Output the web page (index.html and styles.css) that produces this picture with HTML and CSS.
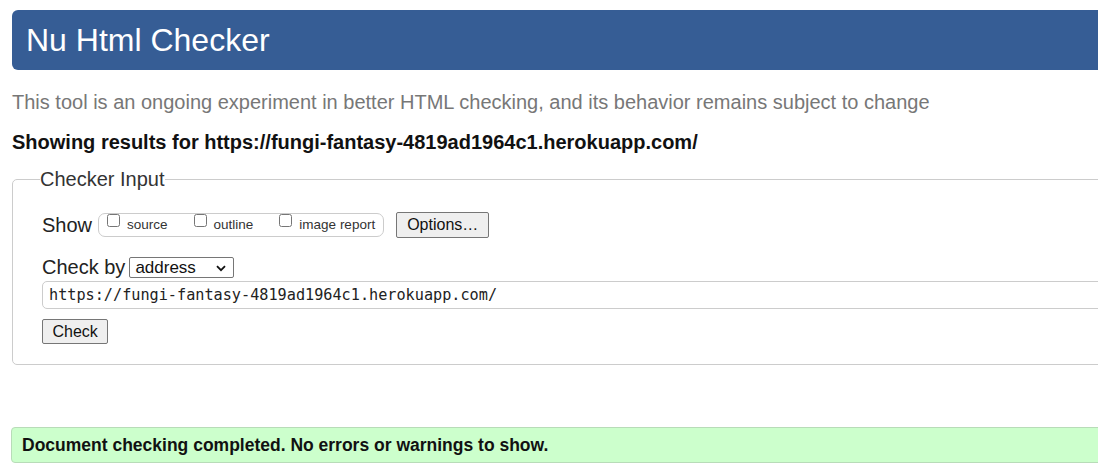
FILE: index.html
```html
<!DOCTYPE html>
<html lang="en">
<head>
<meta charset="utf-8">
<title>Nu Html Checker</title>
<link rel="stylesheet" href="styles.css">
</head>
<body>
<div class="page">
  <h1 class="banner">Nu Html Checker</h1>
  <p class="intro">This tool is an ongoing experiment in better HTML checking, and its behavior remains subject to change</p>
  <p class="showing">Showing results for https://fungi-fantasy-4819ad1964c1.herokuapp.com/</p>
  <fieldset class="input-box">
    <legend class="legend">Checker Input</legend>
    <div class="row show-row">
      <span class="row-label show-label">Show</span>
      <span class="opts">
        <label class="opt"><input type="checkbox"><span class="opt-text">source</span></label>
        <label class="opt"><input type="checkbox"><span class="opt-text">outline</span></label>
        <label class="opt"><input type="checkbox"><span class="opt-text">image report</span></label>
      </span>
      <button class="btn options-btn" type="button">Options…</button>
    </div>
    <div class="row checkby-row">
      <span class="row-label">Check by</span>
      <span class="select-wrap">
        <select class="select"><option>address</option></select>
        <svg class="chevron" width="10" height="7" viewBox="0 0 10 7" aria-hidden="true"><path d="M1 1.2 L5 5.2 L9 1.2" fill="none" stroke="#111" stroke-width="1.8"/></svg>
      </span>
    </div>
    <input class="url" type="text" value="https://fungi-fantasy-4819ad1964c1.herokuapp.com/">
    <div class="row">
      <button class="btn check-btn" type="button">Check</button>
    </div>
  </fieldset>
  <p class="success">Document checking completed. No errors or warnings to show.</p>
</div>
</body>
</html>
```
FILE: styles.css
```css
html, body {
  margin: 0;
  padding: 0;
  overflow: hidden;
  background: #fff;
}
body {
  font-family: "Liberation Sans", Arial, sans-serif;
  color: #222;
}
.page {
  width: 1130px;
  padding: 10px 0 0 12px;
}
.banner {
  margin: 0;
  height: 60px;
  line-height: 60px;
  padding-left: 14px;
  background: #365d95;
  color: #fff;
  font-size: 32px;
  font-weight: normal;
  border-radius: 6px;
}
.intro {
  margin: 20px 0 0;
  font-size: 20px;
  line-height: 24px;
  color: #777;
}
.showing {
  margin: 16px 0 0;
  font-size: 20px;
  line-height: 24px;
  font-weight: bold;
  color: #111;
}
.input-box {
  margin: 14px 0 0;
  border: 1px solid #ccc;
  border-radius: 5px;
  padding: 0 0 20px 29px;
}
.legend {
  padding: 0;
  margin-left: -2px;
  font-size: 20px;
  line-height: 23px;
  color: #333;
}
.row {
  display: flex;
  align-items: center;
}
.show-row {
  margin-top: 21px;
  height: 26px;
}
.row-label {
  font-size: 20px;
  line-height: 23px;
  color: #222;
}
.show-label {
  margin-right: 6px;
}
.opts {
  display: flex;
  box-sizing: border-box;
  height: 24px;
  border: 1px solid #ccc;
  border-radius: 7px;
  padding: 0 8px;
}
.opt {
  display: flex;
  align-items: flex-start;
  margin-right: 26px;
}
.opt:last-child {
  margin-right: 0;
}
.opt input {
  margin: 0 7px 0 0;
  width: 13px;
  height: 13px;
}
.opt-text {
  font-size: 13.5px;
  line-height: 22px;
  color: #333;
}
.btn {
  font-family: "Liberation Sans", Arial, sans-serif;
  font-size: 16px;
  color: #111;
  background: #efefef;
  border: 1px solid #767676;
  border-radius: 2px;
  padding: 0 10px;
  height: 26px;
}
.options-btn {
  margin-left: 12px;
}
.checkby-row {
  margin-top: 18px;
  height: 23px;
}
.select-wrap {
  position: relative;
  display: block;
  margin-left: 4px;
  height: 21px;
}
.select {
  display: block;
  appearance: none;
  -webkit-appearance: none;
  box-sizing: border-box;
  font-family: "Liberation Sans", Arial, sans-serif;
  font-size: 17px;
  height: 21px;
  width: 105px;
  padding: 0 0 0 5px;
  border: 1px solid #767676;
  border-radius: 2px;
  background: #fff;
  color: #111;
}
.chevron {
  position: absolute;
  right: 8px;
  top: 8px;
  pointer-events: none;
}
.url {
  display: block;
  box-sizing: border-box;
  width: 1080px;
  height: 28px;
  margin-top: 2px;
  padding: 0 6px;
  border: 1px solid #ccc;
  border-radius: 5px;
  font-family: "DejaVu Sans Mono", "Liberation Mono", monospace;
  font-size: 15.2px;
  color: #222;
}
.check-btn {
  margin-top: 10px;
  height: 25px;
  padding: 0 9.5px;
}
.success {
  margin: 62px 0 0 -1px;
  height: 34px;
  line-height: 34px;
  padding-left: 10px;
  background: #ccffcc;
  border: 1px solid #b8dcb8;
  border-radius: 4px;
  font-size: 17.5px;
  font-weight: bold;
  color: #111;
}
```
